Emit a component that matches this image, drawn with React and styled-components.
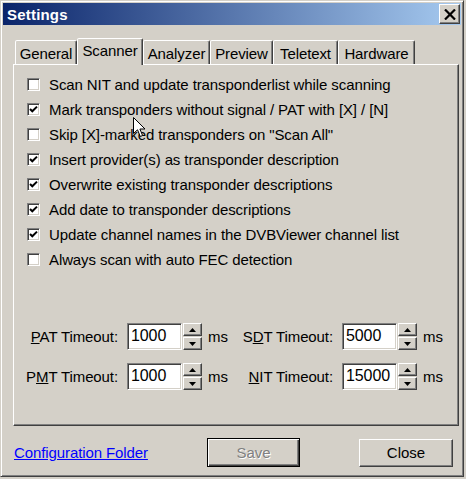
import React from "react";
import styled, { createGlobalStyle, css } from "styled-components";

const GlobalStyle = createGlobalStyle`
  html, body {
    margin: 0;
    padding: 0;
    background: #d4d0c8;
  }
  body {
    font-family: "Liberation Sans", Arial, sans-serif;
    font-size: 14px;
    color: #000;
  }
`;

const raised = css`
  border: 1px solid;
  border-color: #fff #404040 #404040 #fff;
  box-shadow: inset -1px -1px 0 #808080, inset 1px 1px 0 #d4d0c8;
`;

const sunken = css`
  border: 1px solid;
  border-color: #808080 #fff #fff #808080;
  box-shadow: inset 1px 1px 0 #404040, inset -1px -1px 0 #d4d0c8;
`;

const checks = [
  { label: "Scan NIT and update transponderlist while scanning", checked: false },
  { label: "Mark transponders without signal / PAT with [X] / [N]", checked: true },
  { label: 'Skip [X]-marked transponders on "Scan All"', checked: false },
  { label: "Insert provider(s) as transponder description", checked: true },
  { label: "Overwrite existing transponder descriptions", checked: true },
  { label: "Add date to transponder descriptions", checked: true },
  { label: "Update channel names in the DVBViewer channel list", checked: true },
  { label: "Always scan with auto FEC detection", checked: false },
];

const tabs = [
  { name: "General", width: 62 },
  { name: "Scanner", width: 66, active: true },
  { name: "Analyzer", width: 67 },
  { name: "Preview", width: 63 },
  { name: "Teletext", width: 65 },
  { name: "Hardware", width: 77 },
];

const CheckMark = () => (
  <svg width="9" height="9" viewBox="0 0 9 9">
    <path d="M1 4 L3.3 6.3 L8 1.6" fill="none" stroke="#000" strokeWidth="2" />
  </svg>
);

const Arrow = ({ up }) => (
  <svg width="7" height="4" viewBox="0 0 7 4">
    {up ? <path d="M0 4 L3.5 0 L7 4 Z" fill="#000" /> : <path d="M0 0 L3.5 4 L7 0 Z" fill="#000" />}
  </svg>
);

const Spin = () => (
  <SpinBox>
    <SpinButton>
      <Arrow up />
    </SpinButton>
    <SpinButton>
      <Arrow />
    </SpinButton>
  </SpinBox>
);

const Label = ({ text, under }) => {
  const i = text.indexOf(under);
  return (
    <FieldLabel>
      {text.slice(0, i)}
      <u>{under}</u>
      {text.slice(i + 1)}
    </FieldLabel>
  );
};

const Cursor = () => (
  <CursorWrap>
    <svg width="13" height="21" viewBox="0 0 13 21">
      <path
        d="M0.5 0.5 L0.5 16.5 L4.5 12.8 L7.3 19.5 L9.6 18.5 L6.9 12 L12 12 Z"
        fill="#fff"
        stroke="#000"
        strokeWidth="1"
      />
    </svg>
  </CursorWrap>
);

const App = () => {
  return (
    <>
      <GlobalStyle />
      <Window>
        <TitleBar>
          <Title>Settings</Title>
          <CloseX>
            <svg width="12" height="11" viewBox="0 0 12 11">
              <path d="M1 0.5 L11 10.5 M11 0.5 L1 10.5" stroke="#000" strokeWidth="2.2" />
            </svg>
          </CloseX>
        </TitleBar>
        <Content>
          <TabRow>
            {tabs.map((t) => (
              <Tab key={t.name} $w={t.width} $active={t.active}>
                {t.name}
              </Tab>
            ))}
          </TabRow>
          <Panel>
            <CheckList>
              {checks.map((c) => (
                <CheckRow key={c.label}>
                  <Box>{c.checked && <CheckMark />}</Box>
                  <span>{c.label}</span>
                </CheckRow>
              ))}
            </CheckList>
            <TimeoutGrid>
              <Label text="PAT Timeout:" under="P" />
              <Input>1000</Input>
              <Spin />
              <Unit>ms</Unit>
              <Label text="SDT Timeout:" under="D" />
              <Input>5000</Input>
              <Spin />
              <Unit>ms</Unit>
              <Label text="PMT Timeout:" under="M" />
              <Input>1000</Input>
              <Spin />
              <Unit>ms</Unit>
              <Label text="NIT Timeout:" under="N" />
              <Input>15000</Input>
              <Spin />
              <Unit>ms</Unit>
            </TimeoutGrid>
          </Panel>
          <Footer>
            <Link>Configuration Folder</Link>
            <Button $default disabled>
              Save
            </Button>
            <span />
            <Button>Close</Button>
          </Footer>
        </Content>
        <Cursor />
      </Window>
    </>
  );
};

export default App;

const Window = styled.div`
  position: relative;
  width: 464px;
  height: 477px;
  box-sizing: border-box;
  background: #d4d0c8;
  border: 1px solid;
  border-color: #d4d0c8 #404040 #404040 #d4d0c8;
  box-shadow: inset 1px 1px 0 #fff, inset -1px -1px 0 #808080;
  padding: 2px;
`;

const TitleBar = styled.div`
  height: 22px;
  display: flex;
  align-items: center;
  justify-content: space-between;
  padding: 0 1px 0 4px;
  background: linear-gradient(to right, #0a246a, #a6caf0);
`;

const Title = styled.div`
  color: #fff;
  font-weight: bold;
  font-size: 15px;
  letter-spacing: 0.2px;
`;

const CloseX = styled.div`
  ${raised};
  width: 21px;
  height: 20px;
  box-sizing: border-box;
  background: #d4d0c8;
  display: flex;
  align-items: center;
  justify-content: center;
`;

const Content = styled.div`
  padding: 13px 3px 0 10px;
`;

const TabRow = styled.div`
  display: flex;
  align-items: flex-end;
  height: 26px;
  padding-left: 2px;
`;

const Tab = styled.div`
  position: relative;
  width: ${(p) => p.$w}px;
  height: ${(p) => (p.$active ? 27 : 24)}px;
  margin-bottom: ${(p) => (p.$active ? -1 : 0)}px;
  z-index: ${(p) => (p.$active ? 1 : 0)};
  box-sizing: border-box;
  background: #d4d0c8;
  border: 1px solid;
  border-bottom: none;
  border-color: #fff #404040 transparent #fff;
  box-shadow: inset -1px 0 0 #808080;
  border-radius: 2px 2px 0 0;
  display: flex;
  justify-content: center;
  align-items: center;
  padding-top: ${(p) => (p.$active ? 0 : 2)}px;
  padding-bottom: ${(p) => (p.$active ? 3 : 0)}px;
  font-size: 15px;
  letter-spacing: -0.1px;
`;

const Panel = styled.div`
  width: 446px;
  height: 362px;
  box-sizing: border-box;
  border: 1px solid;
  border-color: #fff #404040 #404040 #fff;
  box-shadow: inset -1px -1px 0 #808080;
`;

const CheckList = styled.div`
  padding: 7px 0 0 13px;
`;

const CheckRow = styled.div`
  height: 25px;
  display: flex;
  align-items: center;
  gap: 9px;
  font-size: 15px;
  letter-spacing: -0.1px;
`;

const Box = styled.div`
  ${sunken};
  width: 13px;
  height: 13px;
  box-sizing: border-box;
  background: #fff;
  display: flex;
  align-items: center;
  justify-content: center;
  flex-shrink: 0;
`;

const TimeoutGrid = styled.div`
  display: grid;
  grid-template-columns: 113px 55px 21px 37px 102px 55px 21px auto;
  grid-auto-rows: 27px;
  row-gap: 13px;
  margin-top: 51px;
  align-items: center;
  font-size: 15px;
  letter-spacing: -0.1px;
`;

const FieldLabel = styled.div`
  text-align: right;
  padding-right: 9px;
`;

const Input = styled.div`
  ${sunken};
  height: 27px;
  box-sizing: border-box;
  background: #fff;
  padding: 0 0 2px 3px;
  display: flex;
  align-items: center;
  font-size: 16px;
`;

const SpinBox = styled.div`
  display: flex;
  flex-direction: column;
  gap: 1px;
  height: 27px;
  margin-left: 1px;
  width: 19px;
`;

const SpinButton = styled.div`
  ${raised};
  flex: 1;
  background: #d4d0c8;
  display: flex;
  align-items: center;
  justify-content: center;
`;

const Unit = styled.div`
  padding-left: 5px;
`;

const Footer = styled.div`
  display: grid;
  grid-template-columns: 193px 93px 59px 94px;
  align-items: center;
  margin-top: 12px;
  padding-left: 1px;
`;

const Link = styled.a`
  color: #0000ff;
  text-decoration: underline;
  font-size: 15px;
  letter-spacing: -0.1px;
  cursor: pointer;
`;

const Button = styled.button`
  height: ${(p) => (p.$default ? 29 : 28)}px;
  box-sizing: border-box;
  background: #d4d0c8;
  font-family: "Liberation Sans", Arial, sans-serif;
  font-size: 15px;
  color: #000;
  padding: 0;
  ${(p) =>
    p.$default
      ? css`
          border: 1px solid #000;
          box-shadow: inset 1px 1px 0 #fff, inset -1px -1px 0 #404040,
            inset -2px -2px 0 #808080;
        `
      : raised};
  &:disabled {
    color: #808080;
    text-shadow: 1px 1px 0 #fff;
  }
`;

const CursorWrap = styled.div`
  position: absolute;
  left: 132px;
  top: 116px;
  line-height: 0;
`;
